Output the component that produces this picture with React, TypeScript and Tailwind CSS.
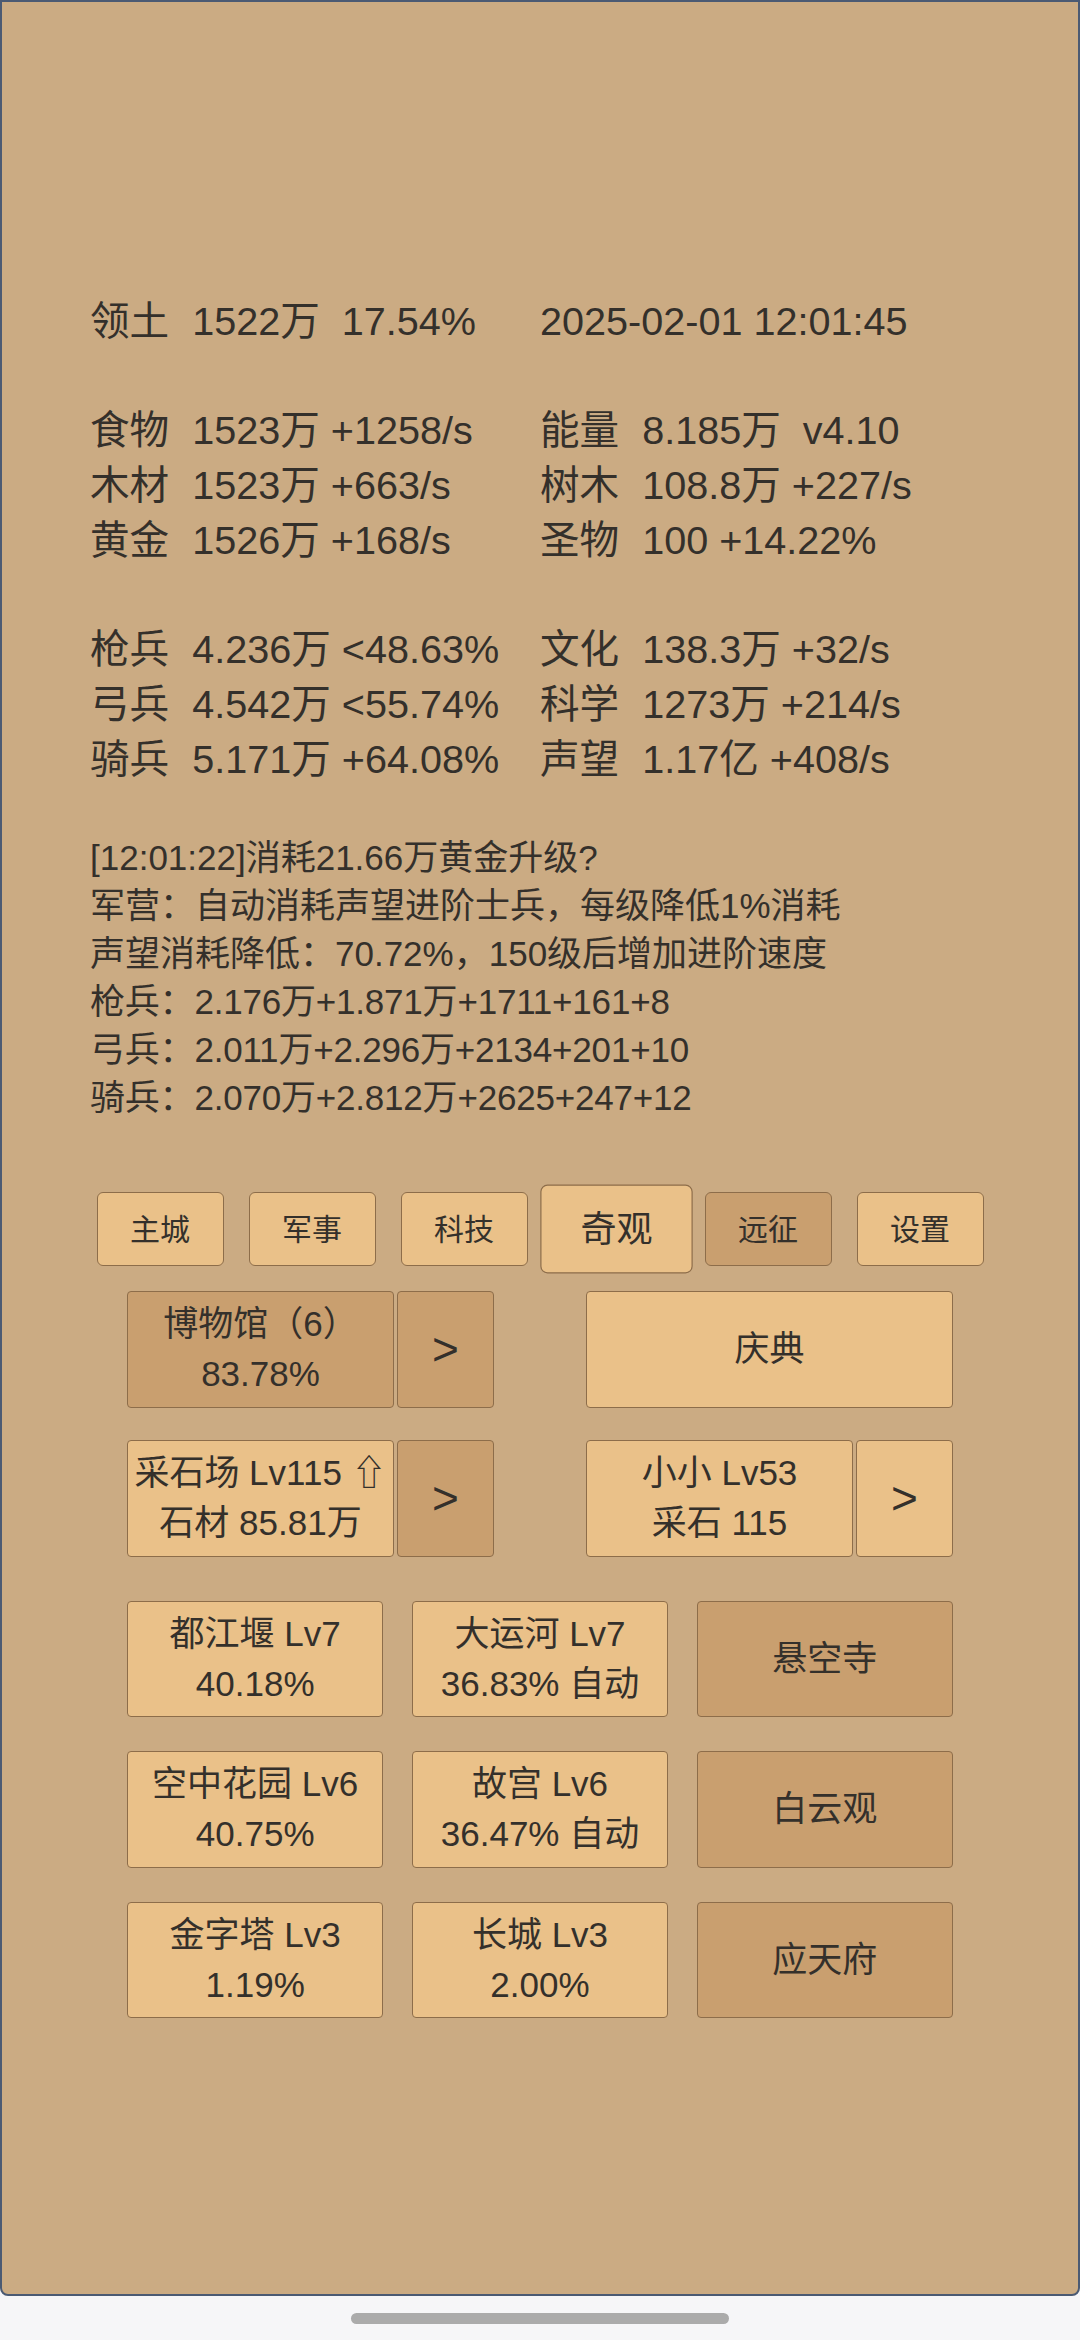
import React from "react";

type Cell = { label?: string; text: string } | null;

const rows: [Cell, Cell][] = [
  [{ label: "领土", text: "1522万  17.54%" }, { text: "2025-02-01 12:01:45" }],
  [null, null],
  [{ label: "食物", text: "1523万 +1258/s" }, { label: "能量", text: "8.185万  v4.10" }],
  [{ label: "木材", text: "1523万 +663/s" }, { label: "树木", text: "108.8万 +227/s" }],
  [{ label: "黄金", text: "1526万 +168/s" }, { label: "圣物", text: "100 +14.22%" }],
  [null, null],
  [{ label: "枪兵", text: "4.236万 <48.63%" }, { label: "文化", text: "138.3万 +32/s" }],
  [{ label: "弓兵", text: "4.542万 <55.74%" }, { label: "科学", text: "1273万 +214/s" }],
  [{ label: "骑兵", text: "5.171万 +64.08%" }, { label: "声望", text: "1.17亿 +408/s" }],
];

const logs = [
  "[12:01:22]消耗21.66万黄金升级?",
  "军营：自动消耗声望进阶士兵，每级降低1%消耗",
  "声望消耗降低：70.72%，150级后增加进阶速度",
  "枪兵：2.176万+1.871万+1711+161+8",
  "弓兵：2.011万+2.296万+2134+201+10",
  "骑兵：2.070万+2.812万+2625+247+12",
];

function StatCell({ c }: { c: Cell }) {
  if (!c) return <div className="h-[54.7px]">&nbsp;</div>;
  return (
    <div className="flex h-[54.7px] whitespace-pre">
      {c.label ? <span>{c.label}</span> : null}
      <span className={c.label ? "ml-[23px]" : ""}>{c.text}</span>
    </div>
  );
}

const LIGHT = "bg-[#eac189]";
const DARK = "bg-[#c99f6f]";

function NavBtn({ t, dark, active }: { t: string; dark?: boolean; active?: boolean }) {
  return (
    <div
      className={`flex h-[74px] w-[127px] items-center justify-center rounded-[6px] border border-[#8d6d4a] text-[30px] ${
        dark ? DARK : LIGHT
      } ${active ? "scale-[1.2]" : ""}`}
    >
      {t}
    </div>
  );
}

function Btn({
  lines,
  dark,
  w,
  h = "h-[116.5px]",
}: {
  lines: string[];
  dark?: boolean;
  w: string;
  h?: string;
}) {
  return (
    <div
      className={`flex flex-col items-center justify-center rounded-[4px] border border-[#8d6d4a] text-[35px] leading-[50px] whitespace-pre ${
        dark ? DARK : LIGHT
      } ${w} ${h}`}
    >
      {lines.map((l, i) => (
        <div key={i}>{l}</div>
      ))}
    </div>
  );
}

function Arrow({ dark }: { dark?: boolean }) {
  return (
    <div
      className={`flex h-[116.5px] w-[97px] items-center justify-center rounded-[4px] border border-[#8d6d4a] text-[46px] ${
        dark ? DARK : LIGHT
      }`}
    >
      &gt;
    </div>
  );
}

export default function App() {
  return (
    <div className="flex h-[2340px] w-[1080px] flex-col bg-[#f6f6f8] font-['Liberation_Sans','Noto_Sans_CJK_SC',sans-serif] text-[#34302b]">
      <div className="h-[2296px] w-full rounded-b-[8px] border-2 border-[#4b5a73] bg-[#cbab83]">
        <div className="pt-[292px] pl-[88px]">
          <div className="grid grid-cols-[450px_1fr] text-[39.6px] leading-[54.7px]">
            {rows.map((r, i) => (
              <React.Fragment key={i}>
                <StatCell c={r[0]} />
                <StatCell c={r[1]} />
              </React.Fragment>
            ))}
          </div>
          <div className="mt-[48px] text-[35px] leading-[48px]">
            {logs.map((l, i) => (
              <div key={i} className={`whitespace-pre ${i >= 3 ? "tracking-[-0.2px]" : ""}`}>
                {l}
              </div>
            ))}
          </div>
        </div>

        <div className="mt-[70px] flex justify-center gap-[25px]">
          <NavBtn t="主城" />
          <NavBtn t="军事" />
          <NavBtn t="科技" />
          <NavBtn t="奇观" active />
          <NavBtn t="远征" dark />
          <NavBtn t="设置" />
        </div>

        <div className="mx-auto mt-[25px] flex w-[826px] justify-between">
          <div className="flex gap-[3px]">
            <Btn lines={["博物馆（6）", "83.78%"]} dark w="w-[267px]" />
            <Arrow dark />
          </div>
          <Btn lines={["庆典"]} w="w-[367px]" />
        </div>

        <div className="mx-auto mt-[32.5px] flex w-[826px] justify-between">
          <div className="flex gap-[3px]">
            <Btn lines={["采石场 Lv115 ⇧", "石材 85.81万"]} w="w-[267px]" />
            <Arrow dark />
          </div>
          <div className="flex gap-[3px]">
            <Btn lines={["小小 Lv53", "采石 115"]} w="w-[267px]" />
            <Arrow />
          </div>
        </div>

        <div className="mx-auto mt-[44px] grid w-[826px] grid-cols-3 gap-x-[28.5px] gap-y-[34px]">
          <Btn lines={["都江堰 Lv7", "40.18%"]} w="w-full" />
          <Btn lines={["大运河 Lv7", "36.83% 自动"]} w="w-full" />
          <Btn lines={["悬空寺"]} dark w="w-full" />
          <Btn lines={["空中花园 Lv6", "40.75%"]} w="w-full" />
          <Btn lines={["故宫 Lv6", "36.47% 自动"]} w="w-full" />
          <Btn lines={["白云观"]} dark w="w-full" />
          <Btn lines={["金字塔 Lv3", "1.19%"]} w="w-full" />
          <Btn lines={["长城 Lv3", "2.00%"]} w="w-full" />
          <Btn lines={["应天府"]} dark w="w-full" />
        </div>
      </div>
      <div className="flex flex-1 items-center justify-center">
        <div className="h-[11px] w-[378px] rounded-full bg-[#ababab]" />
      </div>
    </div>
  );
}
